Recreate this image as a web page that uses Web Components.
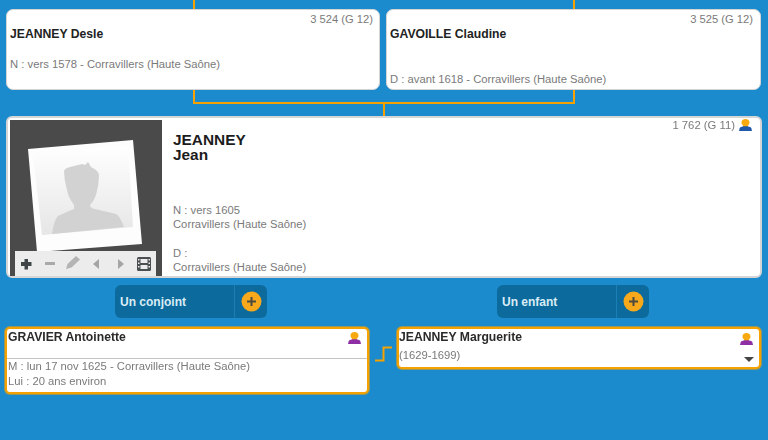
<!DOCTYPE html>
<html lang="fr"><head><meta charset="utf-8"><title>Arbre</title>
<style>
html,body{margin:0;padding:0;height:440px;overflow:hidden;background:#1b8bcd;font-family:"Liberation Sans",Arial,sans-serif}
</style></head><body>
<tree-page>
  <div slot="parents">
    <parent-card sosa="3 524 (G 12)" name="JEANNEY Desle" info="N : vers 1578 - Corravillers (Haute Saône)" info-pos="mid"></parent-card>
    <parent-card sosa="3 525 (G 12)" name="GAVOILLE Claudine" info="D : avant 1618 - Corravillers (Haute Saône)" info-pos="end"></parent-card>
  </div>
  <main-card slot="main"></main-card>
  <add-button slot="add1">Un conjoint</add-button>
  <add-button slot="add2">Un enfant</add-button>
  <relative-card slot="spouse" name="GRAVIER Antoinette" kind="spouse"></relative-card>
  <relative-card slot="child" name="JEANNEY Marguerite" kind="child"></relative-card>
</tree-page>
<script>
const personIcon=(c)=>`<svg style="display:block" width="13" height="12" viewBox="0 0 13 12" aria-hidden="true"><path d="M6.500 0C4.200 0 2.500 1.400 2.500 3.500c0 1.400.7 2.500 1.700 3.200V8.500h4.600V6.700c1-.7 1.700-1.800 1.700-3.200C10.500 1.400 8.800 0 6.500 0z" fill="#f7a90f"/><path d="M0 12l.7-2.800C1 8.200 2.600 7.700 4.200 7.200h4.600c1.600.5 3.200 1 3.500 2L13 12z" fill="${c}"/></svg>`;
function def(name,html){
  customElements.define(name,class extends HTMLElement{
    connectedCallback(){
      if(this.shadowRoot)return;
      const r=this.attachShadow({mode:'open'});
      r.innerHTML=typeof html==='function'?html(this):html;
    }
  });
}
def('tree-page',`<style>
:host{display:block;width:768px;height:440px;overflow:hidden;filter:blur(.25px)}
.parents{height:90px}
.bracket{margin-left:193px;width:378px;height:12px;border:solid #f5a200;border-width:0 2px 2px 2px}
.stem{margin-left:383px;width:2px;height:12px;background:#f5a200}
.main{padding:0 6px 0 6px}
.adds{display:flex;padding:7px 0 0 115px;gap:230px}
.rel{display:flex;align-items:flex-start;padding:8px 6px 0 4px}
.link{width:26px;height:44px;flex:none}
</style>
<div class="parents"><slot name="parents"></slot></div>
<div class="bracket"></div><div class="stem"></div>
<div class="main"><slot name="main"></slot></div>
<div class="adds"><slot name="add1"></slot><slot name="add2"></slot></div>
<div class="rel"><slot name="spouse"></slot>
<svg class="link" viewBox="0 0 26 44" aria-hidden="true"><path d="M5 34.500h8.500v-13h8.500" fill="none" stroke="#f5a200" stroke-width="2"/></svg>
<slot name="child"></slot></div>`);
document.querySelector('[slot=parents]').style.cssText='display:flex;gap:6px;padding:9px 7px 0 6px;height:81px;box-sizing:border-box';
def('parent-card',h=>{
  const end=h.getAttribute('info-pos')==='end';
  return `<style>
:host{display:block;position:relative;flex:${end?'0 0 375px':'0 0 374px'};height:81px;box-sizing:border-box;background:#fff;border:1px solid #d4d4d4;border-radius:7px;padding:3px ${end?7:6}px 0 3px;color:#7a7a7a}
:host::before{content:"";position:absolute;left:186px;top:-10px;width:2px;height:9px;background:#f5a200}
.s{text-align:right;font-size:11.200px;line-height:13px}
.n{font-weight:bold;font-size:12.200px;line-height:14px;color:#222;margin-top:1px}
.i{font-size:11.250px;line-height:13px;margin-top:${end?'32':'17'}px}
</style><div class="s">${h.getAttribute('sosa')}</div><div class="n">${h.getAttribute('name')}</div><div class="i">${h.getAttribute('info')}</div>`;
});
def('main-card',`<style>
:host{display:flex;height:162px;box-sizing:border-box;background:#fff;border:2px solid #d6d6d6;border-radius:6px;padding:2px;color:#7a7a7a;position:relative}
.ph{width:152px;height:156px;flex:none;display:block}
.t{padding:12px 0 0 11px;flex:1;font-size:11.250px;line-height:14.300px}
.n{font-weight:bold;font-size:15.400px;line-height:15px;color:#1c1c1c}
.d{margin-top:41px}
.s{position:absolute;right:8px;top:0;display:flex;align-items:center;gap:4px;font-size:11.300px;line-height:15px}
.s svg{margin-top:-1px}
</style>
<svg class="ph" viewBox="10 120 152 156" aria-hidden="true">
<defs><linearGradient id="g" x1="0" y1="0" x2="0" y2="1"><stop offset="0" stop-color="#fff"/><stop offset="1" stop-color="#e6e6e6"/></linearGradient></defs>
<rect x="10" y="120" width="152" height="156" fill="#4a4a4a"/>
<polygon points="28,149 133,140 142,244 37,252" fill="#fdfdfd"/>
<polygon points="33,154 128,145 133,227 42,235" fill="url(#g)"/>
<path d="M64 171Q65 168 70 167L82 164L85 165L88 162L91 167Q98 170 99 175Q99 185 96 195Q94 201 90 205Q90 208 95 209L116 214Q120 216 124 227L52 234Q54 220 58 216Q66 212 74 209L74 205Q68 197 67 190Q64 180 64 171z" fill="#d2d2d2"/>
<rect x="15" y="251" width="141" height="25" fill="#ececec"/>
<path d="M24.500 259h3.500v3h3.500v4h-3.500v3.500h-3.500v-3.500h-3.500v-4h3.500z" fill="#3e4648"/>
<rect x="45" y="262" width="10" height="3" rx=".5" fill="#a8a8a8"/>
<path d="M66 269l1.500-5 8.500-8 4 3.500-8.500 8z" fill="#b4b4b4"/>
<path d="M99 259v10l-6-5z" fill="#a5a5a5"/><path d="M118 259v10l6-5z" fill="#a5a5a5"/>
<rect x="137" y="257" width="14" height="14" rx="1.500" fill="#4a4f4f"/><rect x="140.500" y="259" width="7" height="4" fill="#ececec"/><rect x="140.500" y="265" width="7" height="4" fill="#ececec"/><path d="M138 259h1.500v1.500H138zM138 262.500h1.500v1.500H138zM138 266h1.500v1.500H138zM148.500 259h1.500v1.500h-1.500zM148.500 262.500h1.500v1.500h-1.500zM148.500 266h1.500v1.500h-1.500z" fill="#ececec"/>
</svg>
<div class="t"><div class="n">JEANNEY<br>Jean</div><div class="d">N : vers 1605<br>Corravillers (Haute Saône)<br><br>D :<br>Corravillers (Haute Saône)</div></div>
<div class="s">1 762 (G 11) ${personIcon('#1f58a8')}</div>`);
def('add-button',`<style>
:host{display:flex;width:152px;height:33px;box-sizing:border-box;background:#0c6b9c;border-radius:6px;color:#d9ecf6;font-weight:bold;font-size:12px;align-items:center}
.l{width:119px;padding-left:5px;box-sizing:border-box}
.r{flex:1;align-self:stretch;border-left:1px solid #1b7fb5;display:flex;align-items:center;justify-content:center}
</style><div class="l"><slot></slot></div><div class="r"><svg width="21" height="21" viewBox="0 0 21 21" aria-hidden="true"><circle cx="10.500" cy="10.500" r="10" fill="#f7a81b"/><path d="M6 10.500h9M10.500 6v9" stroke="#4d4a3f" stroke-width="2"/></svg></div>`);
def('relative-card',h=>{
  const sp=h.getAttribute('kind')==='spouse';
  return `<style>
:host{display:block;position:relative;margin:1px;width:364px;height:${sp?67:42}px;box-sizing:border-box;background:#fff;border:2px solid #f5a200;border-radius:5px;box-shadow:0 0 0 1px rgba(245,162,0,.55);color:#7a7a7a;font-size:11.250px}
.n{font-weight:bold;font-size:12.200px;line-height:14px;color:#2a2a2a;padding:1px 0 0 1px;height:${sp?29:18}px;box-sizing:border-box}
.c .n{padding-left:0}
.i{position:absolute;right:6px;top:${sp?3:4}px}
.sep{border-top:1px solid #c4c4c4;padding:0 0 0 1px;line-height:15.200px}
.sub{line-height:14px;padding-top:1px}
.arrow{position:absolute;right:5px;bottom:5px;width:0;height:0;border:5px solid transparent;border-top:5px solid #444;border-bottom:0}
</style><div class="${sp?'':'c'}"><div class="n">${h.getAttribute('name')}</div></div><div class="i">${personIcon('#8f2fa6')}</div>`+
  (sp?`<div class="sep">M : lun 17 nov 1625 - Corravillers (Haute Saône)<br>Lui : 20 ans environ</div>`:`<div class="sub">(1629-1699)</div><div class="arrow"></div>`);
});
</script>
</body></html>
